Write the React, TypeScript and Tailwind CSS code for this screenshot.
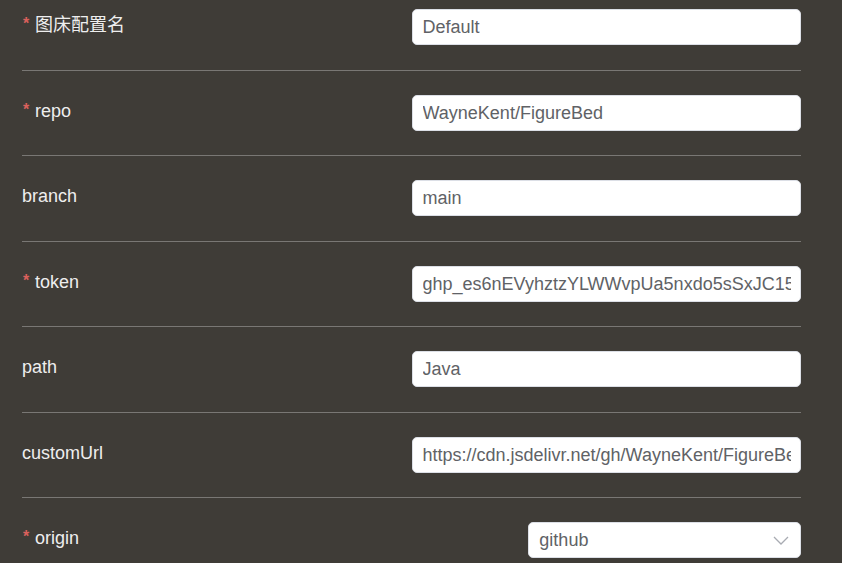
import React from "react";

type Field = { id: string; label: string; value: string; required?: boolean };

const fields: Field[] = [
  { id: "configName", label: "图床配置名", value: "Default", required: true },
  { id: "repo", label: "repo", value: "WayneKent/FigureBed", required: true },
  { id: "branch", label: "branch", value: "main" },
  { id: "token", label: "token", value: "ghp_es6nEVyhztzYLWWvpUa5nxdo5sSxJC15", required: true },
  { id: "path", label: "path", value: "Java" },
  { id: "customUrl", label: "customUrl", value: "https://cdn.jsdelivr.net/gh/WayneKent/FigureBed" },
];

function FieldLabel({ id, label, required }: { id: string; label: string; required?: boolean }) {
  return (
    <label htmlFor={id} className="flex h-8 items-start text-[#eeeeee]">
      {required && (
        <span aria-hidden="true" className="w-[13px] pl-px text-[16px] leading-[30px] font-bold text-[#d9605c]">
          *
        </span>
      )}
      {label}
    </label>
  );
}

export default function App() {
  return (
    <form className="min-h-screen bg-[#3f3c37] pr-[41px] pl-[22px] pt-[9px] font-['Liberation_Sans','Noto_Sans_CJK_SC',sans-serif] text-[18px] leading-8">
      {fields.map((f) => (
        <div key={f.id} className="mb-6 grid grid-cols-2 items-start border-b border-[#797774] pb-[25px] even:pb-6">
          <FieldLabel id={f.id} label={f.label} required={f.required} />
          <input
            id={f.id}
            defaultValue={f.value}
            className="h-9 w-full min-w-0 rounded-[5px] border border-[#dcdfe6] bg-white pr-[9px] pl-[10px] text-[#606266] outline-none"
          />
        </div>
      ))}
      <div className="flex items-start justify-between">
        <FieldLabel id="origin" label="origin" required />
        <div className="relative w-[35%]">
          <select
            id="origin"
            defaultValue="github"
            className="block h-9 w-full appearance-none rounded-[5px] border border-[#dcdfe6] bg-white px-[10px] text-[#606266] outline-none"
          >
            <option>github</option>
          </select>
          <svg viewBox="0 0 16 10" className="pointer-events-none absolute top-[14px] right-3 h-[10px] w-4" fill="none" stroke="#a8abb2" strokeWidth="1.3">
            <path d="M1 1 8 8 15 1" />
          </svg>
        </div>
      </div>
    </form>
  );
}
